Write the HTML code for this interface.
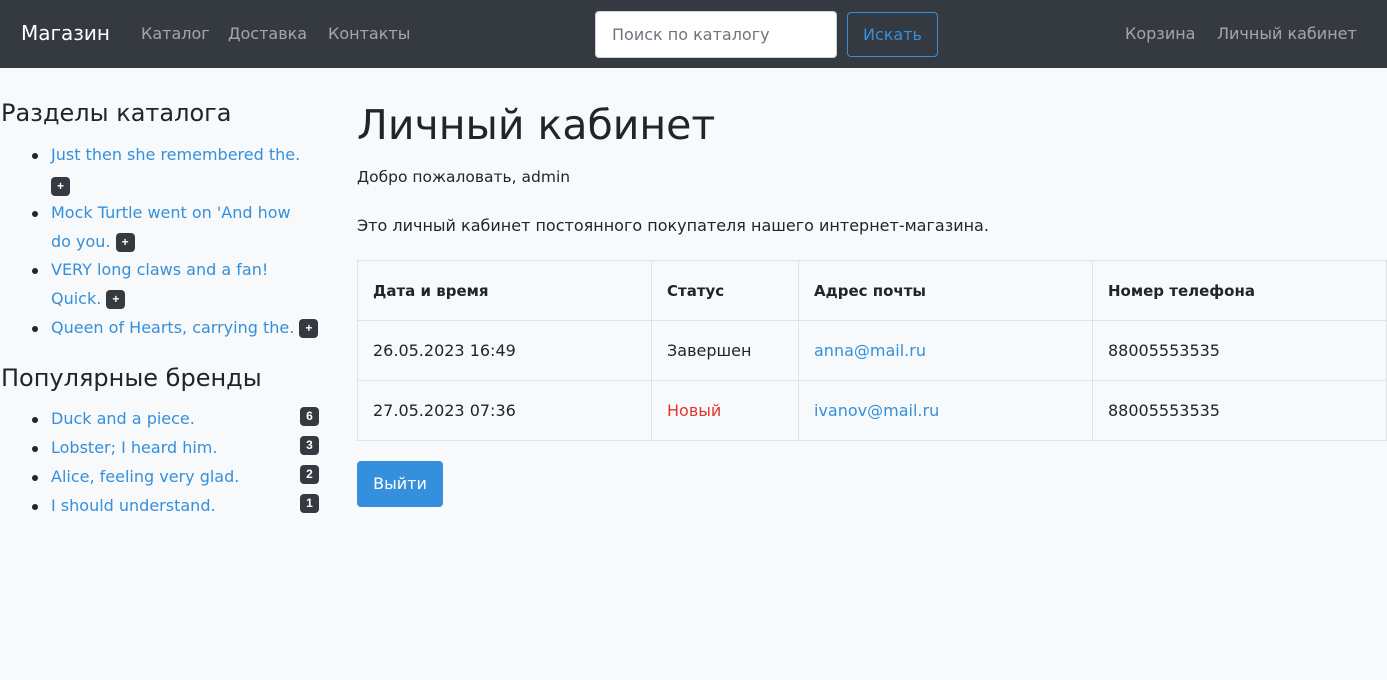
<!DOCTYPE html>
<html><head><meta charset="utf-8"><style>
*{box-sizing:border-box;margin:0;padding:0}
body{width:1387px;height:680px;background:#f8f9fa;font-family:"DejaVu Sans",sans-serif;color:#212529;font-size:16px;position:relative;overflow:hidden}
.a{position:absolute;white-space:nowrap}
nav{position:absolute;left:0;top:0;width:1387px;height:68px;background:#343a40}
.nl{color:rgba(255,255,255,.55);font-size:16px;top:24px}
a,.lk{color:#3490dc;text-decoration:none}
.b{display:inline-block;background:#343a40;color:#fff;font-size:12px;font-weight:bold;border-radius:4px;width:19px;height:19px;line-height:19px;text-align:center;vertical-align:1px;font-family:"Liberation Sans",sans-serif}
.dot{position:absolute;width:6px;height:6px;border-radius:3px;background:#212529}
.s{font-size:16px}
table{position:absolute;left:357px;top:260px;width:1030px;border-collapse:collapse}
td,th{border:1px solid #dee2e6;height:60px;padding:0 15px;text-align:left;font-size:16px}
th{font-weight:bold;font-size:15px}
</style></head><body>
<nav>
<div class="a" style="left:21px;top:21px;color:#fff;font-size:20px">Магазин</div>
<div class="a nl" style="left:141px">Каталог</div>
<div class="a nl" style="left:228px">Доставка</div>
<div class="a nl" style="left:328px">Контакты</div>
<div class="a" style="left:595px;top:11px;width:242px;height:47px;background:#fff;border-radius:4px;border:1px solid #ced4da;padding:13px 16px;color:#6c757d;font-size:16px">Поиск по каталогу</div>
<div class="a" style="left:847px;top:12px;width:91px;height:45px;border:1px solid #3490dc;border-radius:4px;color:#3490dc;font-size:16px;text-align:center;line-height:43px">Искать</div>
<div class="a nl" style="left:1125px">Корзина</div>
<div class="a nl" style="left:1217px">Личный кабинет</div>
</nav>
<div class="a" style="left:1px;top:99px;font-size:24px">Разделы каталога</div>
<div class="dot" style="left:32px;top:153px"></div>
<div class="a lk s" style="left:51px;top:145px">Just then she remembered the.</div>
<div class="a" style="left:51px;top:176px"><span class="b">+</span></div>
<div class="dot" style="left:32px;top:211px"></div>
<div class="a lk s" style="left:51px;top:203px">Mock Turtle went on 'And how</div>
<div class="a lk s" style="left:51px;top:232px">do you. <span class="b">+</span></div>
<div class="dot" style="left:32px;top:268px"></div>
<div class="a lk s" style="left:51px;top:260px">VERY long claws and a fan!</div>
<div class="a lk s" style="left:51px;top:289px">Quick. <span class="b">+</span></div>
<div class="dot" style="left:32px;top:326px"></div>
<div class="a lk s" style="left:51px;top:318px">Queen of Hearts, carrying the. <span class="b">+</span></div>
<div class="a" style="left:1px;top:364px;font-size:24px">Популярные бренды</div>
<div class="dot" style="left:32px;top:417px"></div><div class="a lk s" style="left:51px;top:409px">Duck and a piece.</div><div class="a" style="left:300px;top:406px"><span class="b">6</span></div>
<div class="dot" style="left:32px;top:446px"></div><div class="a lk s" style="left:51px;top:438px">Lobster; I heard him.</div><div class="a" style="left:300px;top:435px"><span class="b">3</span></div>
<div class="dot" style="left:32px;top:475px"></div><div class="a lk s" style="left:51px;top:467px">Alice, feeling very glad.</div><div class="a" style="left:300px;top:464px"><span class="b">2</span></div>
<div class="dot" style="left:32px;top:504px"></div><div class="a lk s" style="left:51px;top:496px">I should understand.</div><div class="a" style="left:300px;top:493px"><span class="b">1</span></div>
<div class="a" style="left:357px;top:101px;font-size:41px">Личный кабинет</div>
<div class="a" style="left:357px;top:168px;font-size:15.5px">Добро пожаловать, admin</div>
<div class="a" style="left:357px;top:216px;font-size:16px">Это личный кабинет постоянного покупателя нашего интернет-магазина.</div>
<table>
<tr><th style="width:294px">Дата и время</th><th style="width:147px">Статус</th><th style="width:294px">Адрес почты</th><th>Номер телефона</th></tr>
<tr><td>26.05.2023 16:49</td><td>Завершен</td><td class="lk">anna@mail.ru</td><td>88005553535</td></tr>
<tr><td>27.05.2023 07:36</td><td style="color:#e3342f">Новый</td><td class="lk">ivanov@mail.ru</td><td>88005553535</td></tr>
</table>
<div class="a" style="left:357px;top:461px;width:86px;height:46px;background:#3490dc;border-radius:4px;color:#fff;font-size:16px;text-align:center;line-height:46px">Выйти</div>
</body></html>
